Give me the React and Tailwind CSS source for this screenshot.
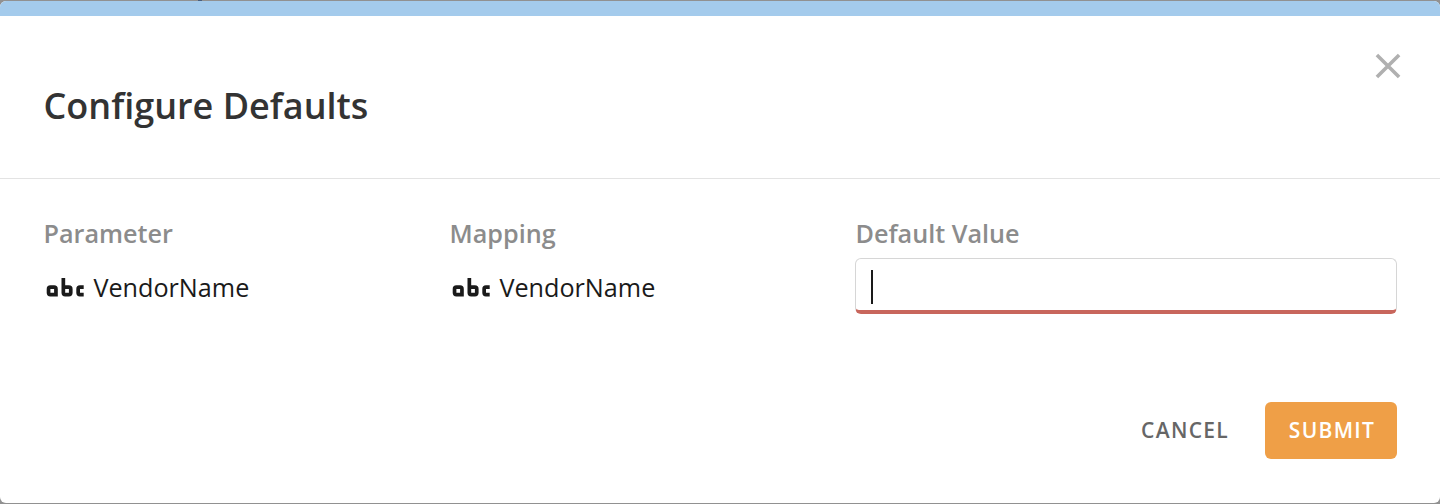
import React from "react";

function AlphabeticalIcon() {
  return (
    <svg viewBox="0 0 24 24" className="size-[44.4px] shrink-0" fill="currentColor" aria-hidden="true">
      <path d="M6,11A2,2 0 0,1 8,13V17H4A2,2 0 0,1 2,15V13A2,2 0 0,1 4,11H6M4,13V15H6V13H4M20,13V15H22V17H20A2,2 0 0,1 18,15V13A2,2 0 0,1 20,11H22V13H20M12,7V11H14A2,2 0 0,1 16,13V15A2,2 0 0,1 14,17H12A2,2 0 0,1 10,15V7H12M12,15H14V13H12V15Z" />
    </svg>
  );
}

function Column({ title, children }) {
  return (
    <div>
      <div className="h-9 pl-[0.5px] text-[25.2px] leading-[35px] font-semibold whitespace-nowrap text-[#8c8c8c]">{title}</div>
      {children}
    </div>
  );
}

function Field({ name }) {
  return (
    <div className="mt-[13px] flex h-11 items-center">
      <AlphabeticalIcon />
      <span className="ml-[6px] text-[25.2px] leading-9">{name}</span>
    </div>
  );
}

export default function App() {
  return (
    <div className="h-[504px] w-[1440px] bg-[#919191] pb-px font-['Open_Sans',sans-serif] text-[#1a1a1a]">
      <div className="h-px pl-[198px]">
        <div className="h-px w-1 bg-[#4a5f7d]" />
      </div>
      <div className="flex h-[502px] flex-col overflow-hidden rounded-md bg-white">
        <div className="h-[15px] shrink-0 bg-[#a4cbec]" />
        <header className="flex h-[163px] shrink-0 justify-between border-b border-[#e3e3e3] pl-[43.5px]">
          <h1 className="mt-[65px] text-[36px] leading-[50px] font-semibold text-[#333]">Configure Defaults</h1>
          <button aria-label="Close" className="mt-[37px] mr-[39px] size-[26px]">
            <svg viewBox="0 0 26 26" className="size-[26px]" stroke="#b0b0b0" strokeWidth="3.6" fill="none">
              <path d="M1.9 1.9 24.1 24.1M24.1 1.9 1.9 24.1" />
            </svg>
          </button>
        </header>
        <main className="grid grid-cols-[406px_406px_542px] pt-[37px] pl-[43px]">
          <Column title="Parameter">
            <Field name="VendorName" />
          </Column>
          <Column title="Mapping">
            <Field name="VendorName" />
          </Column>
          <Column title="Default Value">
            <div className="mt-[6px] flex h-14 items-center rounded-md border border-b-4 border-[#d6d6d6] border-b-[#c8665c] pt-[5px] pl-[15px]">
              <div className="h-[34px] w-[2px] bg-[#1a1a1a]" />
            </div>
          </Column>
        </main>
        <footer className="mt-[88px] mr-[43px] flex items-center justify-end">
          <button className="mr-9 text-[21px] font-semibold tracking-[1.3px] text-[#666]">CANCEL</button>
          <button className="h-[57px] w-[132px] rounded-md bg-[#ef9f47] pl-[2px] text-[21px] font-semibold tracking-[1.3px] text-white">SUBMIT</button>
        </footer>
      </div>
    </div>
  );
}
